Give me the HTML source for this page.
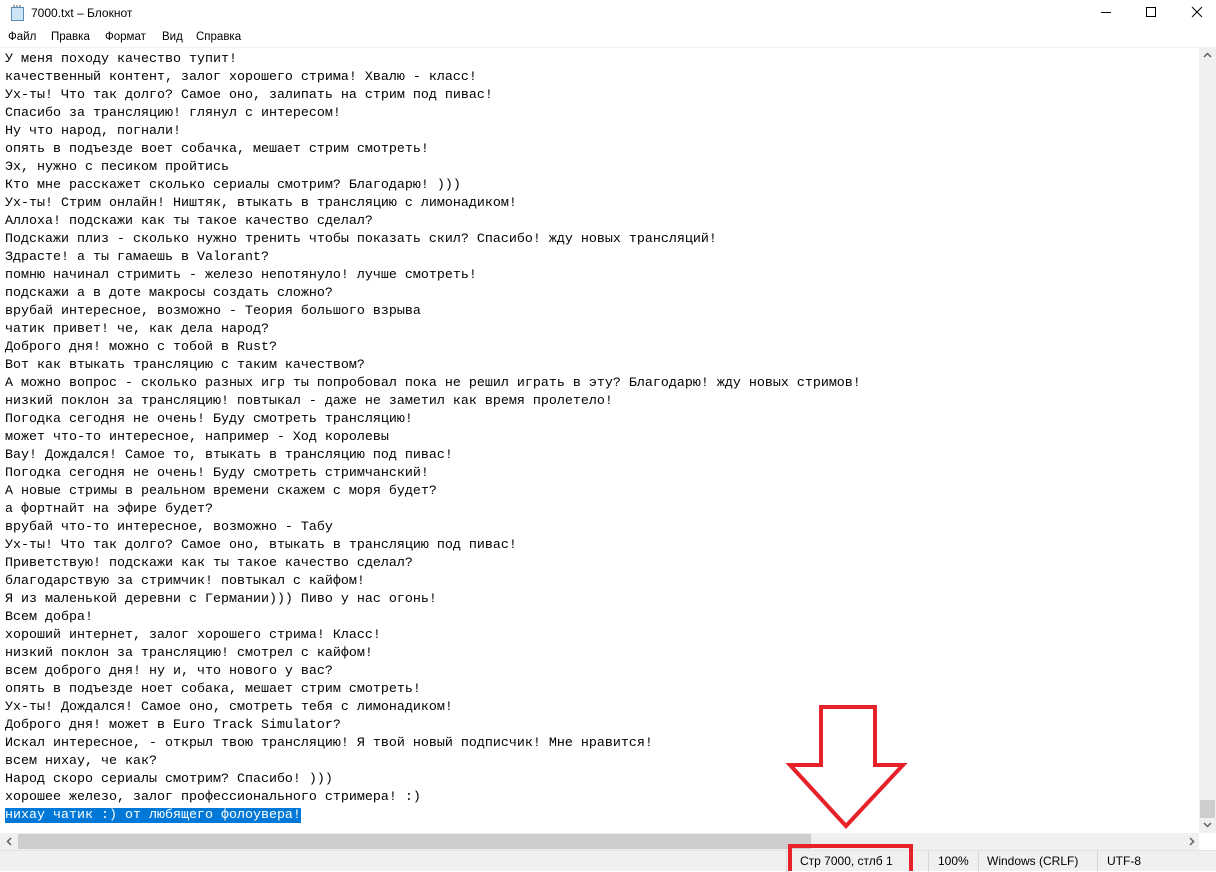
<!DOCTYPE html>
<html><head><meta charset="utf-8"><style>
*{margin:0;padding:0;box-sizing:border-box}
body{width:1216px;height:871px;background:#fff;position:relative;overflow:hidden;font-family:"Segoe UI","Liberation Sans",sans-serif}
.title{position:absolute;top:0;left:0;width:1216px;height:28px;font-size:12px;color:#000}
.title .t{position:absolute;left:31px;top:6px}
.menu{position:absolute;top:29px;left:0;width:1216px;height:19px;font-size:11.5px}
.menu span{position:absolute;top:2px}
.txt{position:absolute;left:5px;top:51px;font-family:"Liberation Mono",monospace;font-size:13.33px;line-height:18px;white-space:pre;color:#000}
.sel{background:#0078d7;color:#fff}
.vs{position:absolute;left:1199px;top:47px;width:17px;height:786px;background:#f0f0f0}
.hs{position:absolute;left:0;top:833px;width:1199px;height:17px;background:#f0f0f0}
.status{position:absolute;left:0;top:850px;width:1216px;height:21px;background:#f0f0f0;border-top:1px solid #e3e3e3;font-size:12px}
.status span{position:absolute;top:3px}
.sep{position:absolute;top:0;width:1px;height:21px;background:#d7d7d7}
</style></head><body>
<div class="title">
<svg style="position:absolute;left:10px;top:5px" width="16" height="17"><rect x="1.5" y="2.5" width="12" height="13" fill="#cde4f5" stroke="#5a8bb5"/><line x1="4" y1="2" x2="4" y2="0" stroke="#555"/><line x1="7" y1="2" x2="7" y2="0" stroke="#555"/><line x1="10" y1="2" x2="10" y2="0" stroke="#555"/></svg>
<span class="t">7000.txt – Блокнот</span>
<svg style="position:absolute;left:1100px;top:6px" width="110" height="16"><line x1="1" y1="6.5" x2="11" y2="6.5" stroke="#000"/><rect x="46.5" y="1.5" width="9" height="9" fill="none" stroke="#000"/><path d="M92 1 L102 11 M102 1 L92 11" stroke="#000"/></svg>
</div>
<div class="menu"><span style="left:8px">Файл</span><span style="left:51px">Правка</span><span style="left:105px">Формат</span><span style="left:162px">Вид</span><span style="left:196px">Справка</span></div>
<div style="position:absolute;left:0;top:47px;width:1199px;height:1px;background:#f0f0f0"></div>
<div class="txt">У меня походу качество тупит!
качественный контент, залог хорошего стрима! Хвалю - класс!
Ух-ты! Что так долго? Самое оно, залипать на стрим под пивас!
Спасибо за трансляцию! глянул с интересом!
Ну что народ, погнали!
опять в подъезде воет собачка, мешает стрим смотреть!
Эх, нужно с песиком пройтись
Кто мне расскажет сколько сериалы смотрим? Благодарю! )))
Ух-ты! Стрим онлайн! Ништяк, втыкать в трансляцию с лимонадиком!
Аллоха! подскажи как ты такое качество сделал?
Подскажи плиз - сколько нужно тренить чтобы показать скил? Спасибо! жду новых трансляций!
Здрасте! а ты гамаешь в Valorant?
помню начинал стримить - железо непотянуло! лучше смотреть!
подскажи а в доте макросы создать сложно?
врубай интересное, возможно - Теория большого взрыва
чатик привет! че, как дела народ?
Доброго дня! можно с тобой в Rust?
Вот как втыкать трансляцию с таким качеством?
А можно вопрос - сколько разных игр ты попробовал пока не решил играть в эту? Благодарю! жду новых стримов!
низкий поклон за трансляцию! повтыкал - даже не заметил как время пролетело!
Погодка сегодня не очень! Буду смотреть трансляцию!
может что-то интересное, например - Ход королевы
Вау! Дождался! Самое то, втыкать в трансляцию под пивас!
Погодка сегодня не очень! Буду смотреть стримчанский!
А новые стримы в реальном времени скажем с моря будет?
а фортнайт на эфире будет?
врубай что-то интересное, возможно - Табу
Ух-ты! Что так долго? Самое оно, втыкать в трансляцию под пивас!
Приветствую! подскажи как ты такое качество сделал?
благодарствую за стримчик! повтыкал с кайфом!
Я из маленькой деревни с Германии))) Пиво у нас огонь!
Всем добра!
хороший интернет, залог хорошего стрима! Класс!
низкий поклон за трансляцию! смотрел с кайфом!
всем доброго дня! ну и, что нового у вас?
опять в подъезде ноет собака, мешает стрим смотреть!
Ух-ты! Дождался! Самое оно, смотреть тебя с лимонадиком!
Доброго дня! может в Euro Track Simulator?
Искал интересное, - открыл твою трансляцию! Я твой новый подписчик! Мне нравится!
всем нихау, че как?
Народ скоро сериалы смотрим? Спасибо! )))
хорошее железо, залог профессионального стримера! :)
<span class="sel">нихау чатик :) от любящего фолоувера!</span></div>
<div class="vs"><svg style="position:absolute;left:4px;top:5px" width="9" height="6"><path d="M1 5 L4.5 1.5 L8 5" stroke="#606060" stroke-width="1.5" fill="none"/></svg>
<div style="position:absolute;left:1px;top:753px;width:15px;height:18px;background:#cdcdcd"></div>
<svg style="position:absolute;left:4px;top:775px" width="9" height="6"><path d="M1 1 L4.5 4.5 L8 1" stroke="#606060" stroke-width="1.5" fill="none"/></svg></div>
<div class="hs"><svg style="position:absolute;left:6px;top:4px" width="6" height="9"><path d="M5 1 L1.5 4.5 L5 8" stroke="#606060" stroke-width="1.5" fill="none"/></svg>
<div style="position:absolute;left:18px;top:1px;width:793px;height:15px;background:#cdcdcd"></div>
<svg style="position:absolute;left:1189px;top:4px" width="6" height="9"><path d="M1 1 L4.5 4.5 L1 8" stroke="#606060" stroke-width="1.5" fill="none"/></svg></div>
<div class="status">
<div class="sep" style="left:786px"></div><div class="sep" style="left:928px"></div><div class="sep" style="left:978px"></div><div class="sep" style="left:1097px"></div>
<span style="left:800px">Стр 7000, стлб 1</span><span style="left:938px">100%</span><span style="left:987px">Windows (CRLF)</span><span style="left:1107px">UTF-8</span>
</div>
<svg style="position:absolute;left:0;top:0" width="1216" height="871">
<path d="M821 707 L875 707 L875 765 L903 765 L846 826 L790 765 L821 765 Z" fill="none" stroke="#e8202a" stroke-width="4" stroke-linejoin="miter"/>
<rect x="790" y="846" width="121" height="27" fill="none" stroke="#e8202a" stroke-width="4"/>
</svg>
</body></html>
